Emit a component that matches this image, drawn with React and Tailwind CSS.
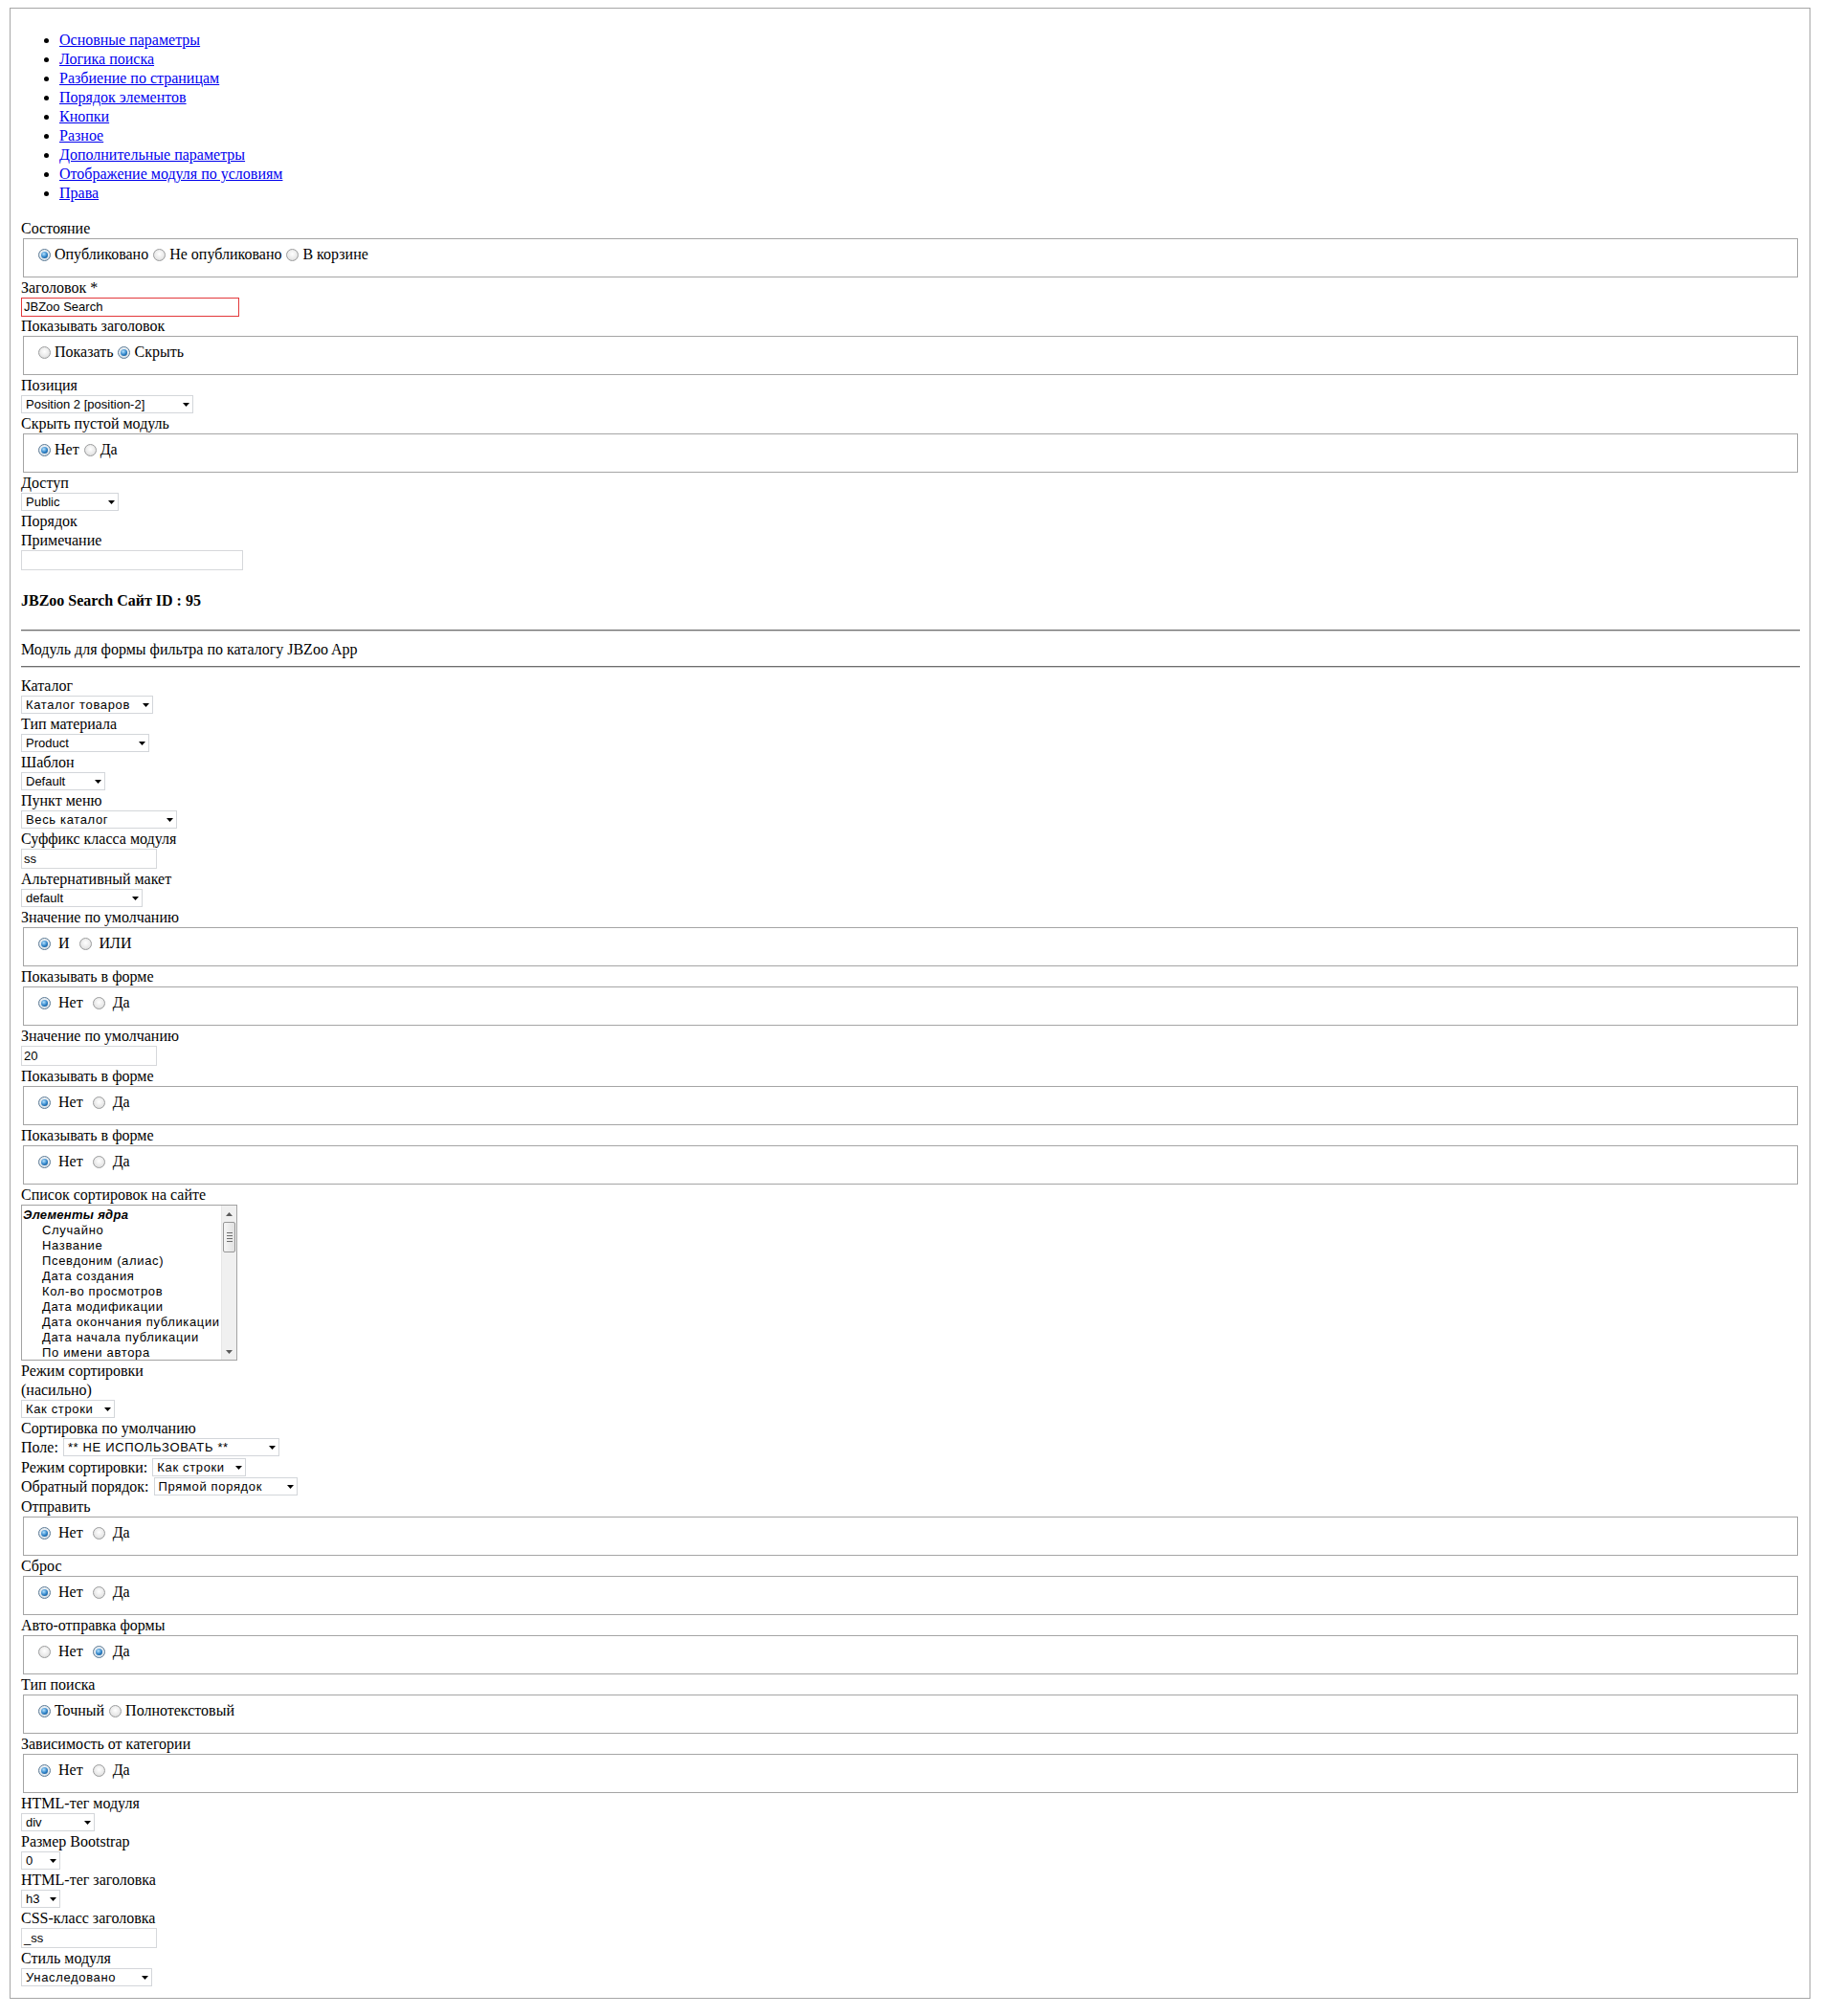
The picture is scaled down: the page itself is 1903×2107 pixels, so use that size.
import React from 'react';

const tabs = [
  'Основные параметры',
  'Логика поиска',
  'Разбиение по страницам',
  'Порядок элементов',
  'Кнопки',
  'Разное',
  'Дополнительные параметры',
  'Отображение модуля по условиям',
  'Права',
];

const sortOptions = [
  'Случайно',
  'Название',
  'Псевдоним (алиас)',
  'Дата создания',
  'Кол-во просмотров',
  'Дата модификации',
  'Дата окончания публикации',
  'Дата начала публикации',
  'По имени автора',
];

const Label = ({ children }) => (
  <div className="h-[20px] leading-[20px] whitespace-nowrap">{children}</div>
);

const Arrow = ({ up, color = '#000' }) => (
  <svg width="7" height="4" viewBox="0 0 7 4" className="shrink-0">
    <polygon points={up ? '0,4 7,4 3.5,0' : '0,0 7,0 3.5,4'} fill={color} />
  </svg>
);

// cyr: cyrillic text in the controls renders a bit wider in the original
const Select = ({ value, w, cyr }) => (
  <div
    className={`${w} h-[19px] mb-[1px] flex items-center border border-[#d3d6da] bg-white pl-[4px] pr-[3px] font-['Liberation_Sans',Arial,sans-serif] text-[13px] leading-[15px]`}
  >
    <span className={cyr ? 'flex-1 truncate tracking-[0.65px]' : 'flex-1 truncate'}>{value}</span>
    <Arrow />
  </div>
);

const TextInput = ({ value, w, red }) => (
  <div
    className={
      red
        ? `${w} h-[20px] flex items-center border border-[#e3393b] bg-white pl-[2px] font-['Liberation_Sans',Arial,sans-serif] text-[13px]`
        : `${w} h-[21px] mb-[1px] flex items-center border border-[#d6d8db] bg-white pl-[2px] font-['Liberation_Sans',Arial,sans-serif] text-[13px]`
    }
  >
    {value}
  </div>
);

const Radio = ({ checked }) => (
  <span
    className={
      checked
        ? 'inline-flex shrink-0 items-center justify-center w-[13px] h-[13px] rounded-full border border-[#5c7a94] bg-[radial-gradient(circle_at_50%_40%,#ffffff,#dfe7ee_60%,#c4cfd8)]'
        : 'inline-flex shrink-0 items-center justify-center w-[13px] h-[13px] rounded-full border border-[#9a9b9c] bg-[radial-gradient(circle_at_50%_40%,#ffffff,#e8e8e8_60%,#cdcdcd)]'
    }
  >
    {checked && (
      <span className="w-[7px] h-[7px] rounded-full bg-[radial-gradient(circle_at_40%_35%,#b4e2ff,#2b80c6_55%,#0d3e70)]" />
    )}
  </span>
);

// fieldset with radio buttons; "wide" rows have more room around the labels
const RadioSet = ({ options, checked = 0, wide }) => (
  <div className="mx-[2px] mb-[1px] h-[41px] border border-[#a5a5a5] pt-[6px] pl-[15px]">
    <div className="flex items-center h-[20px]">
      {options.map((o, i) => (
        <React.Fragment key={o}>
          <Radio checked={i === checked} />
          <span className={wide ? 'ml-[8px] mr-[10px]' : 'ml-[4px] mr-[5px]'}>{o}</span>
        </React.Fragment>
      ))}
    </div>
  </div>
);

const Field = ({ label, children }) => (
  <>
    <Label>{label}</Label>
    {children}
  </>
);

const ListBox = () => (
  <div className="w-[226px] h-[163px] mb-[1px] flex border border-[#a3a3a3] bg-white overflow-hidden font-['Liberation_Sans',Arial,sans-serif] text-[13px] leading-[16px]">
    <div className="flex-1 overflow-hidden pt-[2px] pl-[1px] whitespace-nowrap tracking-[0.65px]">
      <div className="font-bold italic tracking-[0.3px]">Элементы ядра</div>
      {sortOptions.map(o => (
        <div key={o} className="pl-[20px]">{o}</div>
      ))}
    </div>
    {/* scrollbar */}
    <div className="w-[16px] flex flex-col bg-[#f0f0f0] border-l border-[#e6e6e6]">
      <div className="h-[17px] flex items-center justify-center">
        <Arrow up color="#5a5a5a" />
      </div>
      <div className="mx-[1px] h-[32px] rounded-[2px] border border-[#979797] bg-[linear-gradient(90deg,#f5f5f5,#e2e2e2)] flex flex-col items-center justify-center gap-[2px]">
        <span className="w-[6px] h-px bg-[#6c6c6c]" />
        <span className="w-[6px] h-px bg-[#6c6c6c]" />
        <span className="w-[6px] h-px bg-[#6c6c6c]" />
        <span className="w-[6px] h-px bg-[#6c6c6c]" />
      </div>
      <div className="flex-1" />
      <div className="h-[17px] flex items-center justify-center">
        <Arrow color="#5a5a5a" />
      </div>
    </div>
  </div>
);

const InlineRow = ({ label, h, children }) => (
  <div className={`${h} flex items-start gap-[5px] whitespace-nowrap`}>
    <span className="leading-[19px]">{label}</span>
    {children}
  </div>
);

export default function App() {
  return (
    <div className="min-h-[2107px] bg-white pt-[8px] font-['Liberation_Serif','Times_New_Roman',serif] text-[16px] text-black">
      <div className="ml-[10px] mr-[11px] border border-[#a6a6a6] pl-[11px] pr-[10px] pt-[11px] pb-[11px]">
        <ul className="mt-[12px] mb-[17px] pl-[40px] list-disc">
          {tabs.map(t => (
            <li key={t} className="leading-[20px]">
              <a href="#" className="text-[#0000ee] underline">{t}</a>
            </li>
          ))}
        </ul>

        <Field label="Состояние">
          <RadioSet options={['Опубликовано', 'Не опубликовано', 'В корзине']} />
        </Field>
        <Field label="Заголовок *">
          <TextInput value="JBZoo Search" w="w-[228px]" red />
        </Field>
        <Field label="Показывать заголовок">
          <RadioSet options={['Показать', 'Скрыть']} checked={1} />
        </Field>
        <Field label="Позиция">
          <Select value="Position 2 [position-2]" w="w-[180px]" />
        </Field>
        <Field label="Скрыть пустой модуль">
          <RadioSet options={['Нет', 'Да']} />
        </Field>
        <Field label="Доступ">
          <Select value="Public" w="w-[102px]" />
        </Field>
        <Label>Порядок</Label>
        <Field label="Примечание">
          <TextInput value="" w="w-[232px]" />
        </Field>

        <div className="mt-[22px] h-[20px] leading-[20px] font-bold">JBZoo Search Сайт ID : 95</div>

        <div className="mt-[20px] border-t border-b border-t-[#6e6e6e] border-b-[#d0d0d0]" />
        <div className="mt-[9px] h-[20px] leading-[20px]">Модуль для формы фильтра по каталогу JBZoo App</div>
        <div className="mt-[7px] mb-[9px] border-t border-b border-t-[#6e6e6e] border-b-[#d0d0d0]" />

        <Field label="Каталог">
          <Select value="Каталог товаров" w="w-[138px]" cyr />
        </Field>
        <Field label="Тип материала">
          <Select value="Product" w="w-[134px]" />
        </Field>
        <Field label="Шаблон">
          <Select value="Default" w="w-[88px]" />
        </Field>
        <Field label="Пункт меню">
          <Select value="Весь каталог" w="w-[163px]" cyr />
        </Field>
        <Field label="Суффикс класса модуля">
          <TextInput value="ss" w="w-[142px]" />
        </Field>
        <Field label="Альтернативный макет">
          <Select value="default" w="w-[127px]" />
        </Field>
        <Field label="Значение по умолчанию">
          <RadioSet options={['И', 'ИЛИ']} wide />
        </Field>
        <Field label="Показывать в форме">
          <RadioSet options={['Нет', 'Да']} wide />
        </Field>
        <Field label="Значение по умолчанию">
          <TextInput value="20" w="w-[142px]" />
        </Field>
        <Field label="Показывать в форме">
          <RadioSet options={['Нет', 'Да']} wide />
        </Field>
        <Field label="Показывать в форме">
          <RadioSet options={['Нет', 'Да']} wide />
        </Field>
        <Field label="Список сортировок на сайте">
          <ListBox />
        </Field>
        <Label>Режим сортировки</Label>
        <Field label="(насильно)">
          <Select value="Как строки" w="w-[98px]" cyr />
        </Field>
        <Label>Сортировка по умолчанию</Label>
        <InlineRow label="Поле:" h="h-[21px]">
          <Select value="** НЕ ИСПОЛЬЗОВАТЬ **" w="w-[226px]" cyr />
        </InlineRow>
        <InlineRow label="Режим сортировки:" h="h-[20px]">
          <Select value="Как строки" w="w-[98px]" cyr />
        </InlineRow>
        <InlineRow label="Обратный порядок:" h="h-[21px]">
          <Select value="Прямой порядок" w="w-[150px]" cyr />
        </InlineRow>
        <Field label="Отправить">
          <RadioSet options={['Нет', 'Да']} wide />
        </Field>
        <Field label="Сброс">
          <RadioSet options={['Нет', 'Да']} wide />
        </Field>
        <Field label="Авто-отправка формы">
          <RadioSet options={['Нет', 'Да']} checked={1} wide />
        </Field>
        <Field label="Тип поиска">
          <RadioSet options={['Точный', 'Полнотекстовый']} />
        </Field>
        <Field label="Зависимость от категории">
          <RadioSet options={['Нет', 'Да']} wide />
        </Field>
        <Field label="HTML-тег модуля">
          <Select value="div" w="w-[77px]" />
        </Field>
        <Field label="Размер Bootstrap">
          <Select value="0" w="w-[41px]" />
        </Field>
        <Field label="HTML-тег заголовка">
          <Select value="h3" w="w-[41px]" />
        </Field>
        <Field label="CSS-класс заголовка">
          <TextInput value="_ss" w="w-[142px]" />
        </Field>
        <Field label="Стиль модуля">
          <Select value="Унаследовано" w="w-[137px]" cyr />
        </Field>
      </div>
    </div>
  );
}
